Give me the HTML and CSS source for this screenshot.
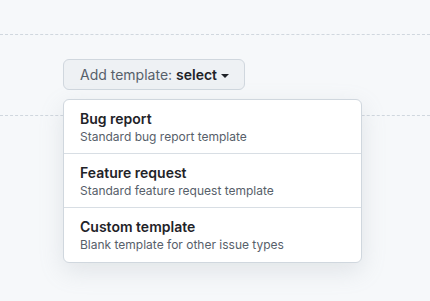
FILE: index.html
```html
<!DOCTYPE html>
<html lang="en">
<head>
    <meta charset="UTF-8">
    <meta name="viewport" content="width=device-width, initial-scale=1.0">
    <title>Add template</title>
    <link rel="stylesheet" href="styles.css">
</head>
<body>

    <div class="top-strip"></div>

    <div class="template-row">
        <div class="picker">
            <button class="picker-button"><span class="label">Add template: </span><span class="value">select</span><span class="caret"></span></button>

            <div class="menu">
                <div class="menu-item">
                    <div class="item-title">Bug report</div>
                    <div class="item-desc">Standard bug report template</div>
                </div>
                <div class="menu-item">
                    <div class="item-title">Feature request</div>
                    <div class="item-desc">Standard feature request template</div>
                </div>
                <div class="menu-item">
                    <div class="item-title">Custom template</div>
                    <div class="item-desc">Blank template for other issue types</div>
                </div>
            </div>
        </div>
    </div>

</body>
</html>
```

FILE: styles.css
```css
* { box-sizing: border-box; margin: 0; padding: 0; }
html, body {
    min-height: 100%;
}
body {
    min-height: 100vh;
    background: #f6f8fa;
    font-family: Inter, "Liberation Sans", Arial, sans-serif;
    color: #1f2328;
}
.top-strip {
    height: 35px;
    border-bottom: 1px dashed #d0d7de;
}
.template-row {
    height: 81px;
    padding: 24px 63px 0;
    border-bottom: 1px dashed #d0d7de;
}
.picker {
    position: relative;
    display: inline-block;
}
.picker-button {
    display: block;
    height: 31px;
    padding: 0 15px 0 16px;
    background: #eef1f4;
    border: 1px solid #d0d7de;
    border-radius: 6px;
    font-family: inherit;
    font-size: 14px;
    line-height: 29px;
    color: #57606a;
    cursor: pointer;
    white-space: pre;
}
.picker-button .value {
    color: #1f2328;
    font-weight: 600;
}
.caret {
    display: inline-block;
    vertical-align: middle;
    margin-left: 4px;
    border-top: 4px solid #1f2328;
    border-left: 4px solid transparent;
    border-right: 4px solid transparent;
}
.menu {
    position: absolute;
    z-index: 10;
    top: 40px;
    left: 0;
    width: 299px;
    background: white;
    border: 1px solid #d0d7de;
    border-radius: 6px;
    box-shadow: 0 8px 24px rgba(140, 149, 159, 0.2);
    overflow: hidden;
}
.menu-item {
    height: 54px;
    padding: 10px 16px 0;
    border-bottom: 1px solid #d8dee4;
}
.menu-item:last-child {
    border-bottom: none;
}
.item-title {
    font-size: 14px;
    font-weight: 600;
    line-height: 18px;
}
.item-desc {
    font-size: 12px;
    color: #57606a;
    line-height: 18px;
}
```
